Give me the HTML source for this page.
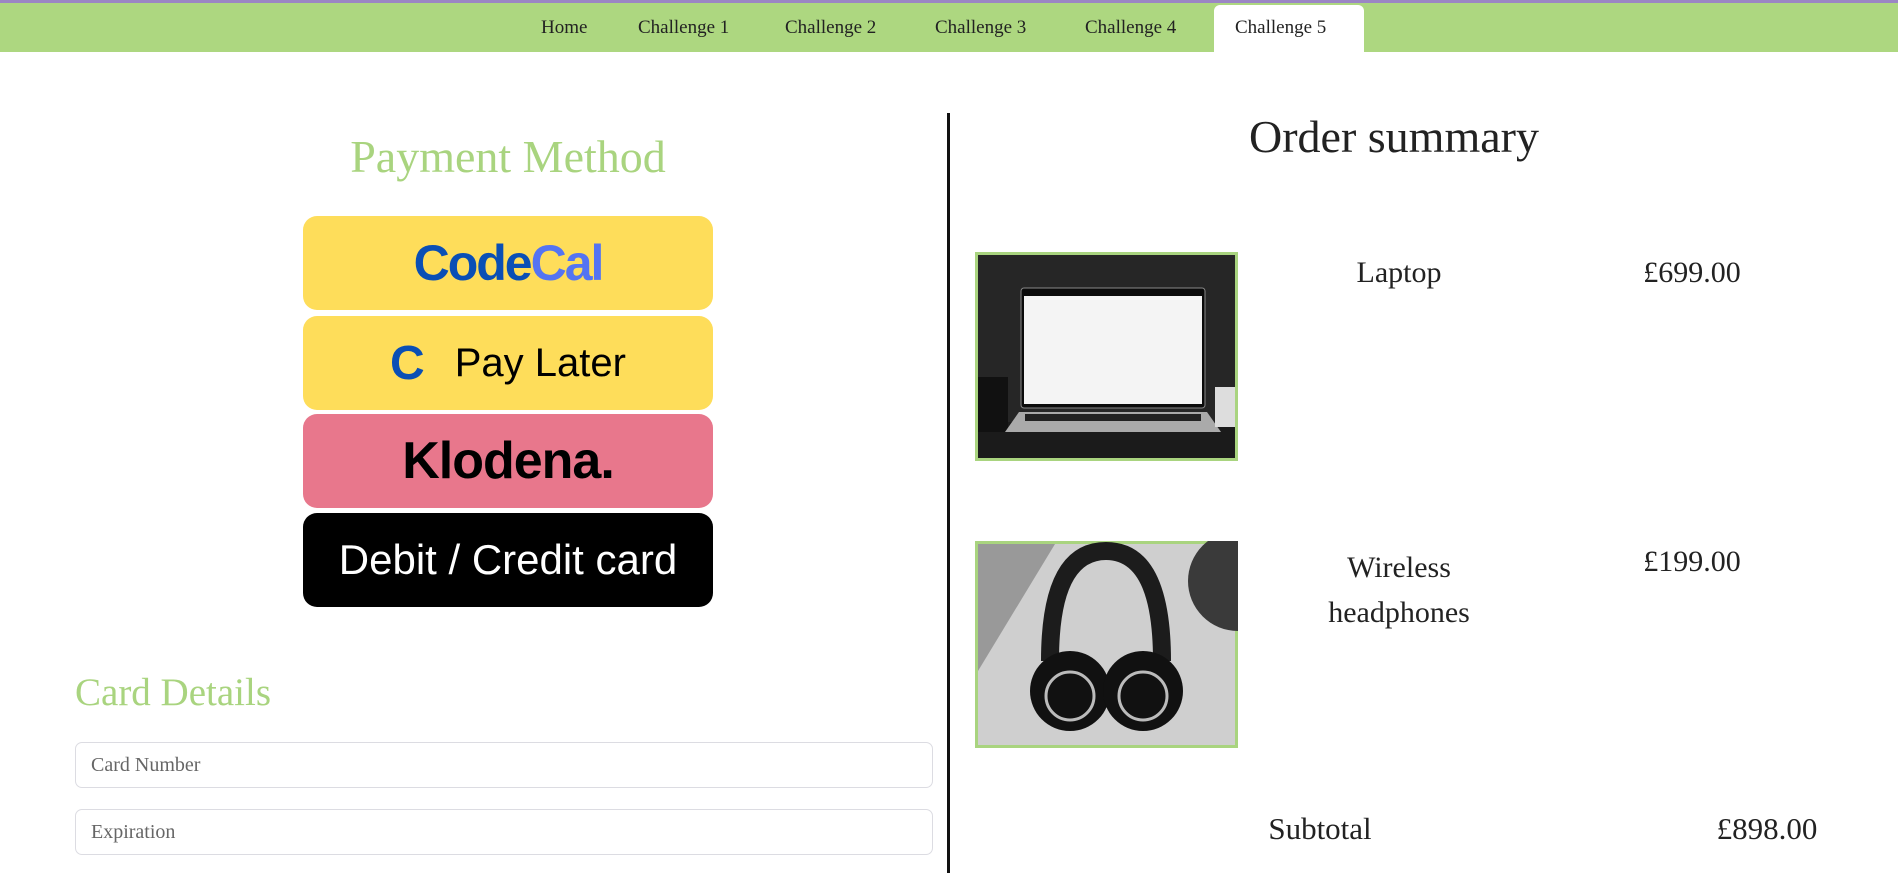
<!DOCTYPE html>
<html><head><style>
*{margin:0;padding:0;box-sizing:border-box}
body{width:1898px;height:862px;overflow:hidden;background:#fff;font-family:"Liberation Serif",serif;position:relative;color:#222}
.nav{position:absolute;left:0;top:0;width:1898px;height:52px;background:#add780;border-top:3px solid #9b86c4}
.nav a{position:absolute;top:14px;font-size:19px;color:#222;text-decoration:none}
.tab{position:absolute;left:1214px;top:2px;width:150px;height:50px;background:#fff;border-radius:6px 6px 0 0}
.abs{position:absolute}
.btn{position:absolute;left:303px;width:410px;height:94px;border-radius:14px;display:flex;align-items:center;justify-content:center;font-family:"Liberation Sans",sans-serif}
.green{color:#a9d47f}
.inp{position:absolute;left:75px;width:858px;height:46px;border:1px solid #dcdce2;border-radius:7px;font-size:20px;color:#666;padding:11px 15px}
.c{text-align:center;font-size:30px}
</style></head><body>
<div class="nav">
<div class="tab"></div>
<a style="left:541px">Home</a>
<a style="left:638px">Challenge 1</a>
<a style="left:785px">Challenge 2</a>
<a style="left:935px">Challenge 3</a>
<a style="left:1085px">Challenge 4</a>
<a style="left:1235px">Challenge 5</a>
</div>
<div class="abs green" style="left:208px;top:130px;width:600px;text-align:center;font-size:46px">Payment Method</div>
<div class="btn" style="top:216px;background:#fedd5a;font-size:50px;font-weight:bold;letter-spacing:-2px"><span style="color:#0a4fb5">Code</span><span style="color:#5474f2">Cal</span></div>
<div class="btn" style="top:316px;background:#fedd5a;font-size:40px;color:#000"><span style="color:#0a4fb5;font-weight:bold;font-size:48px;margin-right:30px">C</span>Pay Later</div>
<div class="btn" style="top:414px;background:#e8778c;font-size:52px;font-weight:bold;color:#000;letter-spacing:-1px">Klodena.</div>
<div class="btn" style="top:513px;background:#000;color:#fff;font-size:42px">Debit / Credit card</div>
<div class="abs green" style="left:75px;top:670px;font-size:39px">Card Details</div>
<div class="inp" style="top:742px">Card Number</div>
<div class="inp" style="top:809px">Expiration</div>
<div class="abs" style="left:947px;top:113px;width:3px;height:760px;background:#111"></div>
<div class="abs" style="left:1144px;top:110px;width:500px;text-align:center;font-size:46px">Order summary</div>
<svg class="abs" style="left:975px;top:252px" width="263" height="209" viewBox="0 0 263 209">
<rect width="263" height="209" fill="#a9d47f"/><rect x="3" y="3" width="257" height="203" fill="#262626"/>
<rect x="3" y="170" width="257" height="36" fill="#1b1b1b"/>
<rect x="3" y="125" width="30" height="55" fill="#111"/>
<rect x="46" y="36" width="184" height="120" rx="3" fill="#0b0b0b" stroke="#888"/>
<rect x="49" y="44" width="178" height="108" fill="#f4f4f4"/>
<path d="M30 180 L44 160 H232 L246 180 Z" fill="#aaa"/>
<rect x="50" y="162" width="176" height="7" fill="#222"/>
<rect x="240" y="135" width="20" height="40" fill="#ddd"/>
</svg>
<svg class="abs" style="left:975px;top:541px" width="263" height="207" viewBox="0 0 263 207">
<rect width="263" height="207" fill="#a9d47f"/><rect x="3" y="3" width="257" height="201" fill="#cfcfcf"/>
<path d="M3 3 H80 L3 130 Z" fill="#999"/>
<circle cx="263" cy="40" r="50" fill="#3a3a3a"/>
<path d="M75 120 Q75 10 131 10 Q187 10 187 120" fill="none" stroke="#1c1c1c" stroke-width="18"/>
<circle cx="95" cy="150" r="40" fill="#111"/><circle cx="95" cy="155" r="24" fill="none" stroke="#bbb" stroke-width="3"/>
<circle cx="168" cy="150" r="40" fill="#111"/><circle cx="168" cy="155" r="24" fill="none" stroke="#bbb" stroke-width="3"/>
</svg>
<div class="abs c" style="left:1299px;top:256px;width:200px">Laptop</div>
<div class="abs c" style="left:1592px;top:256px;width:200px">£699.00</div>
<div class="abs c" style="left:1274px;top:545px;width:250px;line-height:45px">Wireless<br>headphones</div>
<div class="abs c" style="left:1592px;top:545px;width:200px">£199.00</div>
<div class="abs c" style="left:1220px;top:811px;width:200px;font-size:31px">Subtotal</div>
<div class="abs c" style="left:1667px;top:811px;width:200px;font-size:31px">£898.00</div>
</body></html>
